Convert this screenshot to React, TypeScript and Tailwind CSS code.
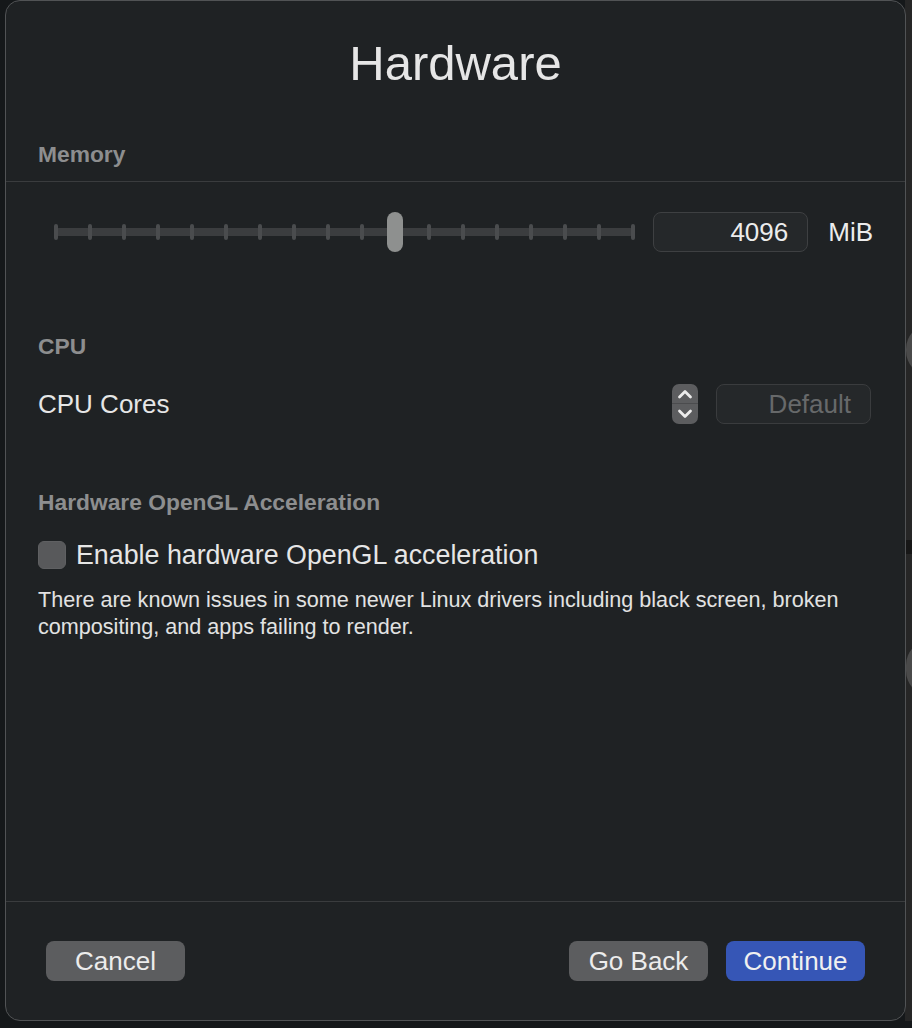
import React from 'react';

const font = { fontFamily: '"Liberation Sans", Arial, sans-serif' };

const TICKS = Array.from({ length: 18 }, (_, i) => i);

function SectionHeader({ children }: { children: React.ReactNode }) {
  return (
    <div className="h-[40px] flex items-center px-[32px] text-[22.8px] font-bold text-[#8d8e8f]">
      {children}
    </div>
  );
}

function MemorySlider() {
  return (
    <div className="relative w-[582px] h-[40px] ml-[16px] flex items-center">
      {/* track */}
      <div className="absolute left-[1px] right-[1px] top-[16px] h-[8px] rounded-full bg-[#3b3d3f]" />
      <div className="relative w-full flex justify-between items-center">
        {TICKS.map((t) => (
          <div key={t} className="w-[4px] h-[16px] rounded-[2px] bg-[#4a4c4e]" />
        ))}
      </div>
      {/* thumb */}
      <div className="absolute left-[333px] top-0 w-[16px] h-[40px] rounded-full bg-[#8e908f]" />
    </div>
  );
}

function Stepper() {
  return (
    <div className="w-[26px] h-[40px] rounded-[7px] bg-[#5c5d5f] flex flex-col items-center overflow-hidden">
      <div className="h-[20px] w-full flex items-center justify-center border-b border-[#4b4c4e] pt-[1px]">
        <svg width="16" height="10" viewBox="0 0 16 10" fill="none">
          <path d="M2.5 8 L8 2.5 L13.5 8" stroke="#ececec" strokeWidth="2.8" strokeLinecap="round" strokeLinejoin="round" />
        </svg>
      </div>
      <div className="h-[20px] w-full flex items-center justify-center pb-[1px]">
        <svg width="16" height="10" viewBox="0 0 16 10" fill="none">
          <path d="M2.5 2 L8 7.5 L13.5 2" stroke="#ececec" strokeWidth="2.8" strokeLinecap="round" strokeLinejoin="round" />
        </svg>
      </div>
    </div>
  );
}

function Button({ label, primary }: { label: string; primary?: boolean }) {
  return (
    <button
      className={
        primary
          ? 'w-[139px] h-[40px] rounded-[8px] bg-[#3656b6] text-[26px] text-[#f0f0f0]'
          : 'w-[139px] h-[40px] rounded-[8px] bg-[#5c5d5f] text-[26px] text-[#ececec]'
      }
    >
      {label}
    </button>
  );
}

export default function App() {
  return (
    <div className="relative w-[912px] h-[1028px] bg-[#15181a] overflow-hidden" style={font}>
      {/* backdrop window peeking out on the right */}
      <div className="absolute right-0 top-0 w-[7px] h-[1021px] bg-[#262626]">
        <div className="absolute left-[1px] top-[324px] w-[50px] h-[52px] rounded-full bg-[#4a4a4a]" />
        <div className="absolute left-0 top-[540px] w-[7px] h-[14px] bg-[#171717]" />
        <div className="absolute left-[1px] top-[640px] w-[50px] h-[56px] rounded-full bg-[#4a4a4a]" />
      </div>

      <div className="absolute left-[5px] top-0 w-[901px] h-[1021px] rounded-[15px] border border-[#515355] bg-[#1f2224] flex flex-col">
        <div className="h-[126px] flex items-center justify-center text-[49px] text-[#e6e6e6]">
          Hardware
        </div>

        <div className="h-[54px] flex items-center px-[32px] text-[22.8px] font-bold text-[#8d8e8f]">
          Memory
        </div>
        <div className="h-px bg-[#3a3c3e]" />

        <div className="h-[100px] flex items-center px-[32px]">
          <MemorySlider />
          <div className="ml-[18px] w-[155px] h-[40px] rounded-[8px] border border-[#3e4042] bg-[#25282a] flex items-center justify-end pr-[19px] text-[26px] text-[#ececec]">
            4096
          </div>
          <div className="ml-[20px] text-[26px] text-[#ececec]">MiB</div>
        </div>

        <div className="h-[44px]" />
        <SectionHeader>CPU</SectionHeader>

        <div className="mt-[18px] h-[40px] flex items-center justify-between pl-[32px] pr-[34px]">
          <div className="text-[26px] text-[#e6e6e6]">CPU Cores</div>
          <div className="flex items-center gap-[18px]">
            <Stepper />
            <div className="w-[155px] h-[40px] rounded-[8px] border border-[#3a3c3e] bg-[#25282a] flex items-center justify-end pr-[19px] text-[26px] text-[#67696a]">
              Default
            </div>
          </div>
        </div>

        <div className="mt-[58px]">
          <SectionHeader>Hardware OpenGL Acceleration</SectionHeader>
        </div>

        <div className="mt-[19px] h-[28px] flex items-center px-[32px]">
          <div className="w-[28px] h-[28px] rounded-[6px] bg-[#58595b] border border-[#5f6062]" />
          <div className="ml-[10px] text-[26.8px] text-[#e6e6e6]">Enable hardware OpenGL acceleration</div>
        </div>

        <div className="mt-[17px] px-[32px] text-[21.6px] leading-[27px] text-[#e2e2e2]">
          There are known issues in some newer Linux drivers including black screen, broken
          <br />
          compositing, and apps failing to render.
        </div>

        <div className="flex-1" />
        <div className="h-px bg-[#3a3c3e]" />
        <div className="h-[118px] flex items-center justify-between pl-[40px] pr-[40px]">
          <Button label="Cancel" />
          <div className="flex gap-[18px]">
            <Button label="Go Back" />
            <Button label="Continue" primary />
          </div>
        </div>
      </div>
    </div>
  );
}
